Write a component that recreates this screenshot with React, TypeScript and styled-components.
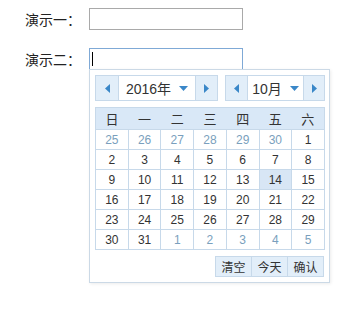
import React from "react";
import styled, { createGlobalStyle } from "styled-components";

const GlobalStyle = createGlobalStyle`
  html, body {
    margin: 0;
    padding: 0;
    background: #fff;
  }
  body {
    font-family: "Liberation Sans", "Noto Sans CJK SC", sans-serif;
    color: #333;
  }
`;

const WEEKDAYS = ["日", "一", "二", "三", "四", "五", "六"];

type Cell = { day: number; other: boolean };

// October 2016 starts on a Saturday
const buildCells = (): Cell[] => {
  const cells: Cell[] = [];
  for (let d = 25; d <= 30; d++) cells.push({ day: d, other: true });
  for (let d = 1; d <= 31; d++) cells.push({ day: d, other: false });
  let n = 1;
  while (cells.length < 42) cells.push({ day: n++, other: true });
  return cells;
};

const Arrow = ({ dir }: { dir: "left" | "right" | "down" }) => {
  if (dir === "down")
    return (
      <svg width="9" height="5" viewBox="0 0 9 5">
        <path d="M0 0h9L4.5 5z" fill="#3a87c8" />
      </svg>
    );
  return (
    <svg width="5" height="9" viewBox="0 0 5 9">
      <path d={dir === "left" ? "M5 0v9L0 4.5z" : "M0 0v9l5-4.5z"} fill="#3a87c8" />
    </svg>
  );
};

const App = () => {
  const cells = buildCells();
  const rows: Cell[][] = [];
  for (let i = 0; i < 6; i++) rows.push(cells.slice(i * 7, i * 7 + 7));

  return (
    <Page>
      <GlobalStyle />
      <Row>
        <Label>演示一：</Label>
        <Field>
          <TextInput />
        </Field>
      </Row>
      <Row>
        <Label>演示二：</Label>
        <Field>
          <TextInput $focused />
          <Caret />
          <Picker>
            <YmBar>
              <YmBox $width={123}>
                <NavBtn $width={22}>
                  <Arrow dir="left" />
                </NavBtn>
                <YmValue>
                  <span>2016年</span>
                  <Arrow dir="down" />
                </YmValue>
                <NavBtn $width={21}>
                  <Arrow dir="right" />
                </NavBtn>
              </YmBox>
              <YmBox $width={100}>
                <NavBtn $width={21}>
                  <Arrow dir="left" />
                </NavBtn>
                <YmValue>
                  <span>10月</span>
                  <Arrow dir="down" />
                </YmValue>
                <NavBtn $width={20}>
                  <Arrow dir="right" />
                </NavBtn>
              </YmBox>
            </YmBar>

            <Grid>
              <thead>
                <tr>
                  {WEEKDAYS.map((w) => (
                    <HeadCell key={w}>{w}</HeadCell>
                  ))}
                </tr>
              </thead>
              <tbody>
                {rows.map((r, i) => (
                  <tr key={i}>
                    {r.map((c, j) => (
                      <DayCell
                        key={j}
                        $other={c.other}
                        $today={!c.other && c.day === 14}
                      >
                        {c.day}
                      </DayCell>
                    ))}
                  </tr>
                ))}
              </tbody>
            </Grid>

            <Footer>
              <ActionBtn>清空</ActionBtn>
              <ActionBtn>今天</ActionBtn>
              <ActionBtn>确认</ActionBtn>
            </Footer>
          </Picker>
        </Field>
      </Row>
    </Page>
  );
};

export default App;

const Page = styled.div`
  display: flex;
  flex-direction: column;
  gap: 18px;
  padding: 8px 0 0 25px;
  width: 330px;
  height: 316px;
  box-sizing: border-box;
`;

const Row = styled.div`
  display: flex;
  align-items: center;
  height: 22px;
`;

const Label = styled.label`
  width: 64px;
  font-family: "Noto Sans CJK SC", sans-serif;
  font-size: 14px;
  color: #222;
`;

const Field = styled.div`
  position: relative;
`;

const TextInput = styled.input<{ $focused?: boolean }>`
  display: block;
  box-sizing: border-box;
  width: 154px;
  height: 22px;
  margin: 0;
  padding: 0 2px;
  border: 1px solid ${({ $focused }) => ($focused ? "#7fa9d6" : "#a9a9a9")};
  outline: none;
  background: #fff;
  caret-color: transparent;
`;

const Caret = styled.span`
  position: absolute;
  left: 3px;
  top: 4px;
  width: 1px;
  height: 14px;
  background: #000;
`;

const Picker = styled.div`
  position: absolute;
  left: 0;
  top: 21px;
  width: 241px;
  box-sizing: border-box;
  padding: 5px;
  background: #fff;
  border: 1px solid #cbd9e6;
  box-shadow: 1px 1px 3px rgba(0, 0, 0, 0.08);
  z-index: 10;
`;

const YmBar = styled.div`
  display: flex;
  justify-content: space-between;
  width: 230px;
  margin-bottom: 6px;
`;

const YmBox = styled.div<{ $width: number }>`
  display: flex;
  width: ${({ $width }) => $width}px;
  height: 26px;
  box-sizing: border-box;
  border: 1px solid #c7d9ea;
`;

const NavBtn = styled.div<{ $width: number }>`
  display: flex;
  align-items: center;
  justify-content: center;
  width: ${({ $width }) => $width}px;
  background: #e2eef9;
`;

const YmValue = styled.div`
  flex: 1;
  display: flex;
  align-items: center;
  justify-content: center;
  gap: 8px;
  border-left: 1px solid #c7d9ea;
  border-right: 1px solid #c7d9ea;
  font-size: 14px;
  color: #333;
  background: #fff;
`;

const Grid = styled.table`
  width: 230px;
  border-collapse: collapse;
  table-layout: fixed;
  border: 1px solid #c7d9ea;
`;

const HeadCell = styled.th`
  height: 21px;
  padding: 0;
  background: #d9e8f7;
  border-bottom: 1px solid #c7d9ea;
  font-family: "Noto Sans CJK SC", sans-serif;
  font-size: 13px;
  font-weight: normal;
  color: #333;
  text-align: center;
`;

const DayCell = styled.td<{ $other?: boolean; $today?: boolean }>`
  height: 19px;
  padding: 0;
  border: 1px solid #c7d9ea;
  text-align: center;
  font-size: 12px;
  color: ${({ $other }) => ($other ? "#7a9fbd" : "#333")};
  background: ${({ $today }) => ($today ? "#d8e6f5" : "#fff")};
`;

const Footer = styled.div`
  display: flex;
  justify-content: flex-end;
  margin-top: 6px;
`;

const ActionBtn = styled.div`
  width: 37px;
  height: 21px;
  box-sizing: border-box;
  display: flex;
  align-items: center;
  justify-content: center;
  border: 1px solid #c7d9ea;
  margin-left: -1px;
  background: #e2eef9;
  font-family: "Noto Sans CJK SC", sans-serif;
  font-size: 12px;
  color: #333;
`;
